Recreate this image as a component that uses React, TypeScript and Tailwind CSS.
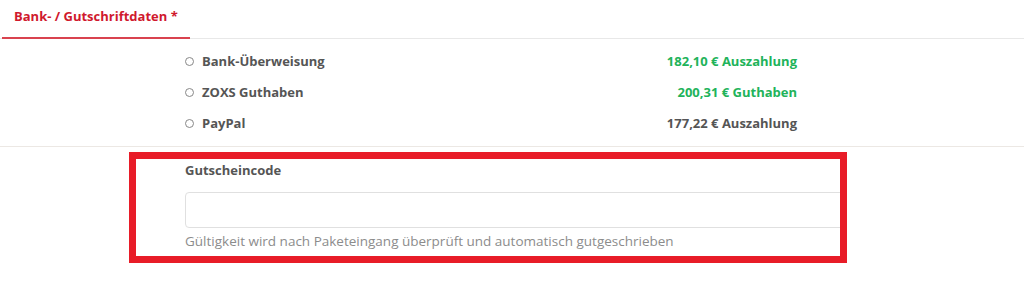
import React, { useState } from 'react';

const options = [
  { id: 'bank', label: 'Bank-Überweisung', amount: '182,10 € Auszahlung', green: true },
  { id: 'zoxs', label: 'ZOXS Guthaben', amount: '200,31 € Guthaben', green: true },
  { id: 'paypal', label: 'PayPal', amount: '177,22 € Auszahlung', green: false },
];

export default function App() {
  const [selected, setSelected] = useState<string | null>(null);
  const [code, setCode] = useState('');

  return (
    <div className="w-[1024px] h-[286px] bg-white overflow-hidden" style={{ fontFamily: '"Open Sans", "Liberation Sans", sans-serif' }}>
      {/* Tabs */}
      <div className="h-[39px] flex items-end border-b border-[#e8e8e8]">
        <div className="ml-[2px] w-[188px] h-[39px] flex items-center pl-[12px] pb-[3px] border-b-2 border-[#d9434f] -mb-px">
          <span className="text-[13px] font-bold text-[#d0192d]">Bank- / Gutschriftdaten *</span>
        </div>
      </div>

      {/* Payout options */}
      <div className="pt-[7px] pb-[7px] border-b border-[#ece8e4]">
        <div className="ml-[185px] w-[612px]">
          {options.map((o) => (
            <label key={o.id} className="h-[31px] flex items-center justify-between cursor-pointer">
              <span className="flex items-center">
                <span
                  onClick={() => setSelected(o.id)}
                  className={`w-[9px] h-[9px] rounded-full border border-[#888] mr-[8px] ${selected === o.id ? 'bg-[#555]' : 'bg-white'}`}
                />
                <span className="text-[13px] font-bold text-[#555]">{o.label}</span>
              </span>
              <span className={`text-[13px] font-bold ${o.green ? 'text-[#21b35a]' : 'text-[#555]'}`}>{o.amount}</span>
            </label>
          ))}
        </div>
      </div>

      {/* Voucher code */}
      <div className="relative pt-[14px]">
        <div className="ml-[185px] w-[660px]">
          <div className="text-[13px] font-bold text-[#555] leading-[18px]">Gutscheincode</div>
          <input
            value={code}
            onChange={(e) => setCode(e.target.value)}
            className="mt-[13px] w-full h-[36px] rounded-[4px] border border-[#e0e0e0] px-3 text-[13px] outline-none"
          />
          <div className="mt-[4px] text-[13.5px] text-[#8c8c8c] leading-[18px]">
            Gültigkeit wird nach Paketeingang überprüft und automatisch gutgeschrieben
          </div>
        </div>
        {/* Highlight annotation */}
        <div className="absolute left-[129px] top-[5px] w-[718px] h-[111px] border-[7px] border-[#e81c28] pointer-events-none" />
      </div>
    </div>
  );
}
